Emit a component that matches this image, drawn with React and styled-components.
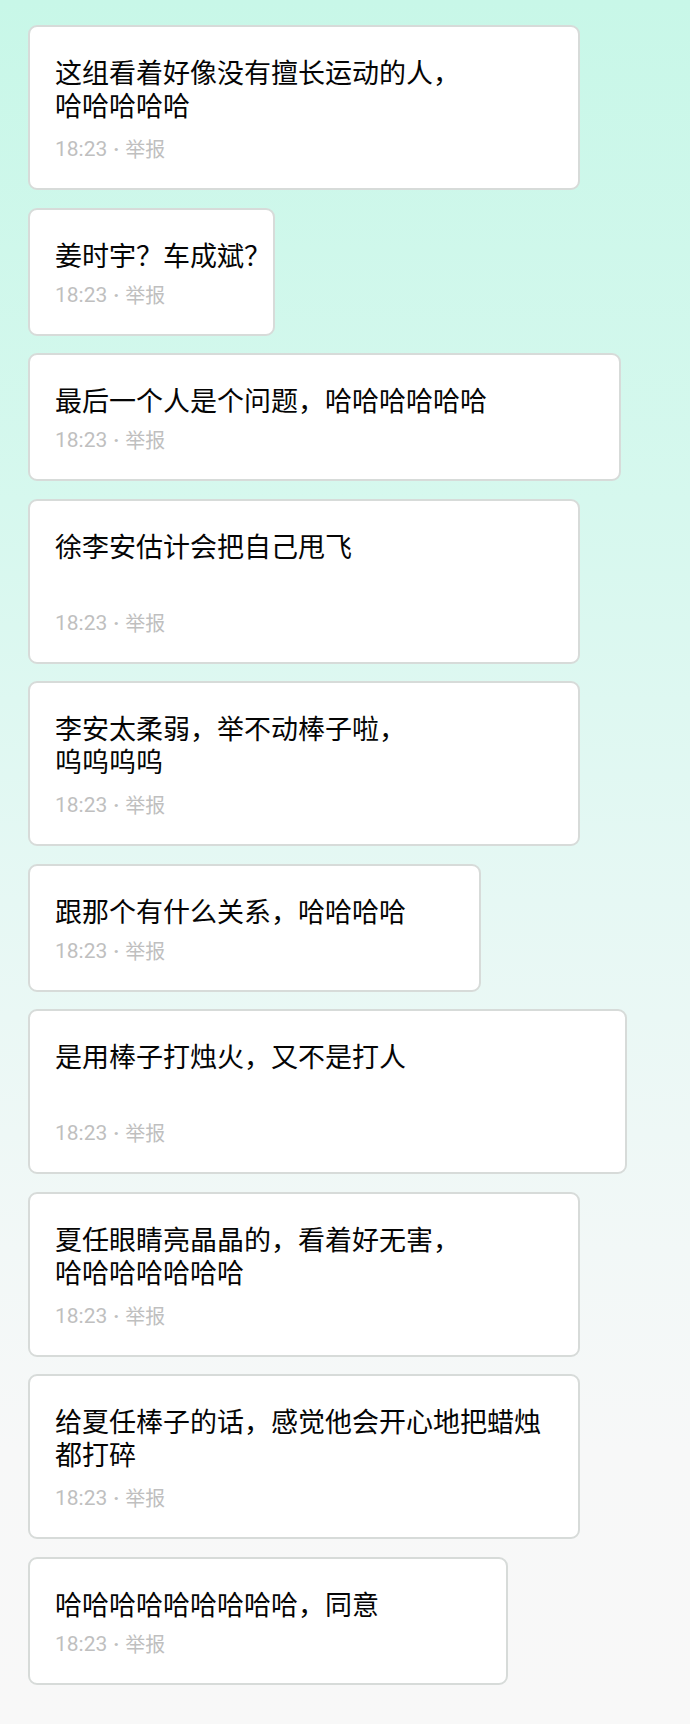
import React from "react";
import styled, { createGlobalStyle } from "styled-components";

const GlobalStyle = createGlobalStyle`
    html, body {
        margin: 0;
        padding: 0;
    }
    body {
        font-family: "Noto Sans CJK SC", "Noto Sans", sans-serif;
        background: #f7f8f8;
    }
`

const Pagina = styled.main`
    min-height: 1724px;
    box-sizing: border-box;
    padding: 25px 0 40px 28px;
    display: flex;
    flex-direction: column;
    align-items: flex-start;
    gap: 17.5px;
    background: linear-gradient(180deg, #c8f7e8 0px, #d6f8ee 500px, #e6f8f4 900px, #f2f8f7 1250px, #f7f8f8 1450px, #f8f8f8 100%);
`

const Cartao = styled.section`
    box-sizing: border-box;
    width: ${(props) => props.$largura}px;
    background: #ffffff;
    border: 2px solid #d7dbd9;
    border-radius: 9px;
    padding: 28px 8px 25px 25px;
    display: flex;
    flex-direction: column;
    gap: 9px;
`

const Texto = styled.p`
    margin: 0;
    font-size: 27px;
    line-height: 33px;
    color: #050505;
    white-space: pre;
    min-height: ${(props) => (props.$linhas > 1 ? 71 : 34)}px;
`

const Meta = styled.div`
    font-family: Roboto, "Noto Sans CJK SC", sans-serif;
    font-size: 21px;
    line-height: 28px;
    height: 28px;
    color: #bfbfbf;
    display: flex;
    align-items: center;
    gap: 6px;
`

const Ponto = styled.span`
    font-size: 20px;
    font-weight: 700;
`

const Denuncia = styled.span`
    font-family: "Noto Sans CJK SC", sans-serif;
    font-size: 20px;
`

const comentarios = [
    { texto: "这组看着好像没有擅长运动的人，\n哈哈哈哈哈", linhas: 2, largura: 552 },
    { texto: "姜时宇？车成斌？", linhas: 1, largura: 247 },
    { texto: "最后一个人是个问题，哈哈哈哈哈哈", linhas: 1, largura: 593 },
    { texto: "徐李安估计会把自己甩飞", linhas: 2, largura: 552 },
    { texto: "李安太柔弱，举不动棒子啦，\n呜呜呜呜", linhas: 2, largura: 552 },
    { texto: "跟那个有什么关系，哈哈哈哈", linhas: 1, largura: 453 },
    { texto: "是用棒子打烛火，又不是打人", linhas: 2, largura: 599 },
    { texto: "夏任眼睛亮晶晶的，看着好无害，\n哈哈哈哈哈哈哈", linhas: 2, largura: 552 },
    { texto: "给夏任棒子的话，感觉他会开心地把蜡烛\n都打碎", linhas: 2, largura: 552 },
    { texto: "哈哈哈哈哈哈哈哈哈，同意", linhas: 1, largura: 480 },
]

const App = () => {
    return (
        <>
            <GlobalStyle />
            <Pagina>
                {comentarios.map((item, index) => {
                    return (
                        <Cartao key={index} $largura={item.largura}>
                            <Texto $linhas={item.linhas}>{item.texto}</Texto>
                            <Meta>
                                <span>18:23</span>
                                <Ponto>·</Ponto>
                                <Denuncia>举报</Denuncia>
                            </Meta>
                        </Cartao>
                    )
                })}
            </Pagina>
        </>
    )
}
export default App;
